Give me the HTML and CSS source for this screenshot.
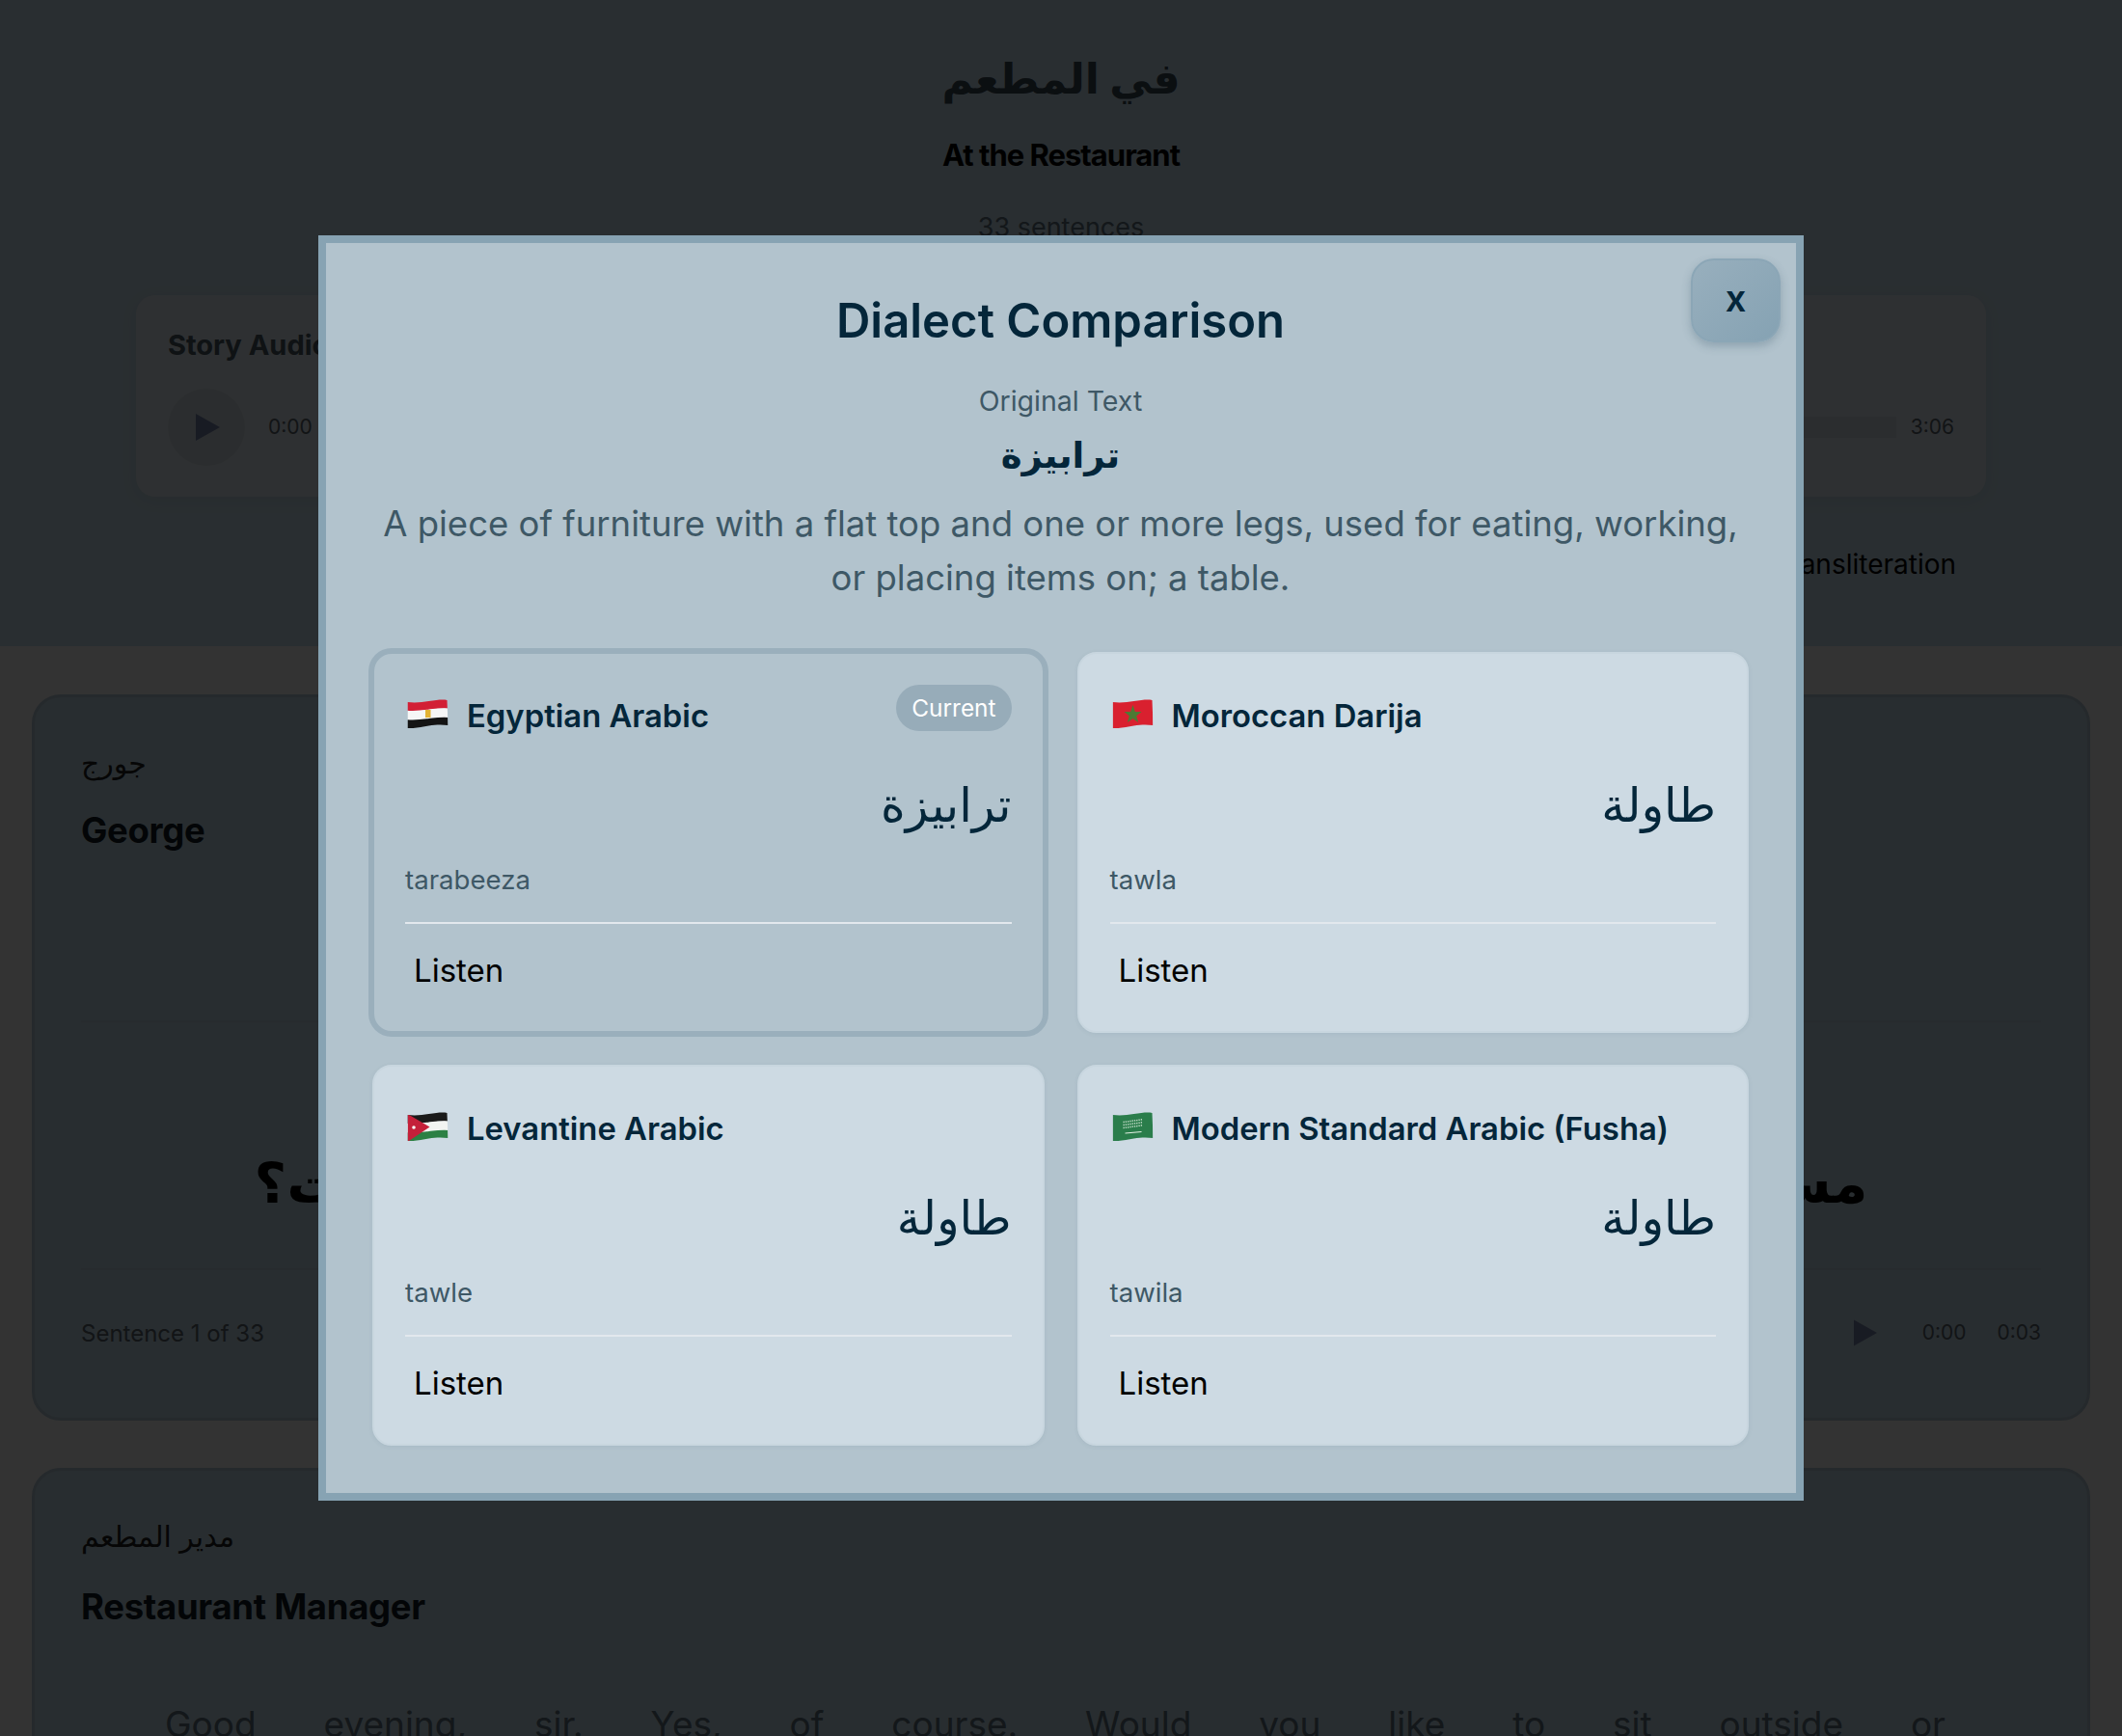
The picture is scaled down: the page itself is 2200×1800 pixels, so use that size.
FILE: index.html
```html
<!DOCTYPE html>
<html lang="en">
<head>
<meta charset="utf-8">
<title>At the Restaurant</title>
<link rel="stylesheet" href="styles.css">
</head>
<body>
<div class="page">
  <header class="story-header">
    <h1 class="story-title" dir="rtl">في المطعم</h1>
    <p class="story-subtitle">At the Restaurant</p>
    <p class="story-count">33 sentences</p>
    <section class="audio-card">
      <h2 class="audio-title">Story Audio</h2>
      <div class="audio-controls">
        <span class="play-circle"><svg class="play-icon" viewBox="0 0 25 28"><path d="M0 0L25 14L0 28Z"/></svg></span>
        <span class="time">0:00</span>
        <span class="progress"></span>
        <span class="time">3:06</span>
      </div>
    </section>
    <div class="toggle-row">Show Transliteration</div>
  </header>
  <main class="dialogue">
    <article class="line-card first">
      <div class="speaker-ar" dir="rtl">جورج</div>
      <div class="speaker-en">George</div>
      <div class="sentence" dir="rtl">مساء الخير يا فندم، عندك حجز باسم حضرتك ولا لسه دلوقت؟</div>
      <div class="line-footer">
        <span class="line-count">Sentence 1 of 33</span>
        <span class="line-audio">
          <svg class="play-small" viewBox="0 0 25 28"><path d="M0 0L25 14L0 28Z"/></svg>
          <span class="time">0:00</span>
          <span class="time">0:03</span>
        </span>
      </div>
    </article>
    <article class="line-card second">
      <div class="speaker-ar" dir="rtl">مدير المطعم</div>
      <div class="speaker-en">Restaurant Manager</div>
      <p class="english-line">Good evening, sir. Yes, of course. Would you like to sit outside or</p>
    </article>
  </main>
</div>

<div class="overlay">
  <div class="modal">
    <button class="close-btn">x</button>
    <h2 class="modal-title">Dialect Comparison</h2>
    <div class="orig-label">Original Text</div>
    <div class="orig-word" dir="rtl">ترابيزة</div>
    <p class="orig-def">A piece of furniture with a flat top and one or more legs, used for eating, working, or placing items on; a table.</p>
    <div class="dialect-grid">
      <div class="dialect-card current">
        <div class="dialect-head">
          <div class="dialect-name">
            <svg class="flag" viewBox="0 0 42 30">
              <clipPath id="cp-eg"><path d="M0 3C9 4 15 3 22 2C30 1 36 0 41 1L42 27C34 26 29 26.500 22 27.500C14 29 7 30.500 0 30Z"/></clipPath>
              <g clip-path="url(#cp-eg)" fill="none" stroke-width="9.800">
                <path stroke="#d21f35" d="M-2 7C9 8 15 7 22 6C30 5 36 4 44 5"/>
                <path stroke="#f6f6f6" d="M-2 16.500C9 17.500 15 16.500 22 15.500C30 14.500 36 13.500 44 14.500"/>
                <path stroke="#141414" d="M-2 26C9 27 15 26 22 25C30 24 36 23 44 24"/>
                <path d="M18.500 11L24 11L24 19L18.500 19Z" fill="#e3b233" stroke="none"/>
              </g>
            </svg>
            <span>Egyptian Arabic</span>
          </div>
          <span class="badge">Current</span>
        </div>
        <div class="dialect-word" dir="rtl">ترابيزة</div>
        <div class="dialect-trans">tarabeeza</div>
        <div class="dialect-foot"><button class="listen">Listen</button></div>
      </div>

      <div class="dialect-card">
        <div class="dialect-head">
          <div class="dialect-name">
            <svg class="flag" viewBox="0 0 42 30">
              <clipPath id="cp-ma"><path d="M0 3C9 4 15 3 22 2C30 1 36 0 41 1L42 27C34 26 29 26.500 22 27.500C14 29 7 30.500 0 30Z"/></clipPath>
              <g clip-path="url(#cp-ma)">
                <rect width="42" height="31" fill="#d9202f"/>
                <path d="M21 6L23.300 13L30 13L24.700 17.200L26.600 24L21 19.900L15.400 24L17.300 17.200L12 13L18.700 13Z" fill="#4d7a34"/>
              </g>
            </svg>
            <span>Moroccan Darija</span>
          </div>
        </div>
        <div class="dialect-word" dir="rtl">طاولة</div>
        <div class="dialect-trans">tawla</div>
        <div class="dialect-foot"><button class="listen">Listen</button></div>
      </div>

      <div class="dialect-card">
        <div class="dialect-head">
          <div class="dialect-name">
            <svg class="flag" viewBox="0 0 42 30">
              <clipPath id="cp-jo"><path d="M0 3C9 4 15 3 22 2C30 1 36 0 41 1L42 27C34 26 29 26.500 22 27.500C14 29 7 30.500 0 30Z"/></clipPath>
              <g clip-path="url(#cp-jo)">
                <g fill="none" stroke-width="9.800">
                  <path stroke="#1a1a1a" d="M-2 7C9 8 15 7 22 6C30 5 36 4 44 5"/>
                  <path stroke="#f2f4f2" d="M-2 16.500C9 17.500 15 16.500 22 15.500C30 14.500 36 13.500 44 14.500"/>
                  <path stroke="#2c8044" d="M-2 26C9 27 15 26 22 25C30 24 36 23 44 24"/>
                </g>
                <path d="M0 2L23 15.500L0 31Z" fill="#c4203a"/>
                <circle cx="6.500" cy="16" r="1.800" fill="#f6f6f6"/>
              </g>
            </svg>
            <span>Levantine Arabic</span>
          </div>
        </div>
        <div class="dialect-word" dir="rtl">طاولة</div>
        <div class="dialect-trans">tawle</div>
        <div class="dialect-foot"><button class="listen">Listen</button></div>
      </div>

      <div class="dialect-card">
        <div class="dialect-head">
          <div class="dialect-name">
            <svg class="flag" viewBox="0 0 42 30">
              <clipPath id="cp-sa"><path d="M0 3C9 4 15 3 22 2C30 1 36 0 41 1L42 27C34 26 29 26.500 22 27.500C14 29 7 30.500 0 30Z"/></clipPath>
              <g clip-path="url(#cp-sa)">
                <rect width="42" height="31" fill="#2a7d4b"/>
                <path d="M11 16.500L31 13.800M11 13.500L31 10.800M11 10.500L31 7.800" stroke="#c3dcc8" stroke-width="1.500" stroke-dasharray="1.300 1" fill="none"/>
                <path d="M13 22L30 20.500" stroke="#e4f0e4" stroke-width="1" fill="none"/>
              </g>
            </svg>
            <span>Modern Standard Arabic (Fusha)</span>
          </div>
        </div>
        <div class="dialect-word" dir="rtl">طاولة</div>
        <div class="dialect-trans">tawila</div>
        <div class="dialect-foot"><button class="listen">Listen</button></div>
      </div>
    </div>
  </div>
</div>
</body>
</html>
```
FILE: styles.css
```css
* { box-sizing: border-box; }
html, body { margin: 0; padding: 0; }
body {
  font-family: Inter, "Noto Sans", "DejaVu Sans", sans-serif;
  background: #ffffff;
  color: #000;
  height: 1800px;
  overflow: hidden;
}
.page { height: 1800px; overflow: hidden; background: #ffffff; }

.story-header {
  height: 670px;
  background: #cde5f2;
  padding: 45px 141px 0;
  text-align: center;
}
.story-title {
  margin: 0;
  font-size: 44px;
  line-height: 72px;
  font-weight: 700;
  color: #3a4a55;
}
.story-subtitle {
  margin: 24px 0 0;
  font-size: 31px;
  line-height: 40px;
  font-weight: 700;
  letter-spacing: -1px;
  color: #000;
}
.story-count {
  margin: 37px 0 0;
  font-size: 27px;
  line-height: 36px;
  color: #5f7380;
}
.audio-card {
  margin-top: 52px;
  height: 209px;
  padding: 32px 33px 32px;
  background: #e7f0f7;
  border-radius: 20px;
  box-shadow: 0 4px 16px rgba(60, 80, 100, 0.08);
  text-align: left;
}
.audio-title {
  margin: 0;
  font-size: 29px;
  line-height: 40px;
  font-weight: 700;
  color: #4a5a66;
}
.audio-controls {
  margin-top: 25px;
  display: flex;
  align-items: center;
  gap: 24px;
}
.play-circle {
  width: 80px;
  height: 80px;
  border-radius: 50%;
  background: #d6e2ea;
  display: flex;
  align-items: center;
  justify-content: center;
}
.play-icon { width: 25px; height: 28px; fill: #7a86b0; margin-left: 2px; }
.time { font-size: 21px; line-height: 30px; color: #59656e; white-space: nowrap; }
.progress { flex: 1; height: 22px; background: #d6e0e8; margin-right: -9px; }
.toggle-row {
  margin-top: 50px;
  padding-right: 31px;
  text-align: right;
  font-size: 28px;
  line-height: 40px;
  color: #000;
}

.dialogue {
  padding: 50px 33px 0;
  display: flex;
  flex-direction: column;
  gap: 49px;
}
.line-card {
  background: #c8e0ed;
  border: 3px solid #b8cedb;
  border-radius: 30px;
  padding: 48px 48px 63px;
}
.speaker-ar {
  font-size: 30px;
  line-height: 40px;
  color: #222;
  text-align: end;
}
.speaker-en {
  margin-top: 25px;
  font-size: 36.500px;
  line-height: 50px;
  font-weight: 700;
  letter-spacing: -0.3px;
  color: #121c24;
}
.second .speaker-en { margin-top: 28px; }
.sentence {
  margin-top: 172px;
  height: 259px;
  padding-top: 76px;
  border-top: 2px solid #c2d7e3;
  border-bottom: 2px solid #c2d7e3;
  display: flex;
  align-items: center;
  justify-content: center;
  font-size: 58px;
  font-weight: 700;
  white-space: nowrap;
  color: #000;
}
.line-footer {
  margin-top: 40px;
  height: 50px;
  display: flex;
  align-items: center;
  justify-content: space-between;
}
.line-count { font-size: 24px; color: #59656e; }
.line-audio { display: flex; align-items: center; gap: 32px; }
.play-small { width: 24px; height: 28px; fill: #7a86b0; margin-right: 15px; }
.english-line {
  margin: 72px 0 0;
  padding: 0 99px 0 87px;
  font-size: 37px;
  line-height: 50px;
  text-align: justify;
  text-align-last: justify;
  color: #5f7380;
}

.overlay {
  position: fixed;
  inset: 0;
  background: rgba(0, 0, 0, 0.8);
  display: flex;
  align-items: center;
  justify-content: center;
}
.modal {
  position: relative;
  width: 1540px;
  padding: 49px 49px 49px 48px;
  background: #b2c3cd;
  border: 8px solid #87a3b3;
  text-align: center;
}
.close-btn {
  position: absolute;
  top: 16px;
  right: 16px;
  width: 93px;
  height: 87px;
  border: 2px solid #8ba6b6;
  border-radius: 24px;
  background: linear-gradient(135deg, #98afbd, #85a2b3);
  box-shadow: 0 4px 10px rgba(60, 90, 110, 0.3);
  font-family: inherit;
  font-size: 38px;
  font-weight: 600;
  color: #04263a;
  padding-bottom: 6px;
}
.modal-title {
  margin: 0;
  font-size: 49px;
  line-height: 64px;
  font-weight: 600;
  color: #04263a;
}
.orig-label {
  margin-top: 31px;
  font-size: 28.500px;
  line-height: 40px;
  color: #3e5866;
}
.orig-word {
  margin-top: 6px;
  font-size: 37px;
  line-height: 60px;
  font-weight: 700;
  color: #04263a;
}
.orig-def {
  margin: 13px 0 0;
  font-size: 36.500px;
  line-height: 56px;
  color: #3e5866;
}
.dialect-grid {
  margin-top: 49px;
  display: grid;
  grid-template-columns: 1fr 1fr;
  gap: 33px 34px;
}
.dialect-card {
  height: 395px;
  padding: 32px 32px 0;
  background: #cddae3;
  border: 2px solid #c8d6df;
  border-radius: 20px;
  text-align: left;
  box-shadow: 0 1px 4px rgba(90, 120, 140, 0.12);
}
.dialect-card.current {
  background: #b2c3cd;
  border-color: #9aafbc;
  box-shadow: 0 0 0 4px #9aafbc;
}
.dialect-head {
  height: 48px;
  display: flex;
  align-items: flex-start;
  justify-content: space-between;
}
.dialect-name {
  margin-top: 9px;
  display: flex;
  align-items: center;
  gap: 19px;
  font-size: 32.800px;
  line-height: 46px;
  font-weight: 600;
  white-space: nowrap;
  color: #04263a;
}
.flag { width: 43px; height: 30px; margin: -4px 0 0 2px; flex: none; }
.badge {
  height: 48px;
  padding: 0 16px;
  border-radius: 24px;
  background: #97acb9;
  color: #fff;
  font-size: 24.400px;
  line-height: 48px;
}
.dialect-word {
  margin-top: 41px;
  font-size: 49px;
  line-height: 72px;
  text-align: right;
  color: #04263a;
}
.dialect-trans {
  margin-top: 23px;
  font-size: 27.600px;
  line-height: 36px;
  color: #3e5866;
}
.dialect-foot {
  margin-top: 26px;
  padding-top: 28px;
  border-top: 2px solid #e2e8ed;
}
.listen {
  padding: 0 9px;
  background: none;
  border: 0;
  font-family: inherit;
  font-size: 33px;
  line-height: 40px;
  color: #000;
}
```
